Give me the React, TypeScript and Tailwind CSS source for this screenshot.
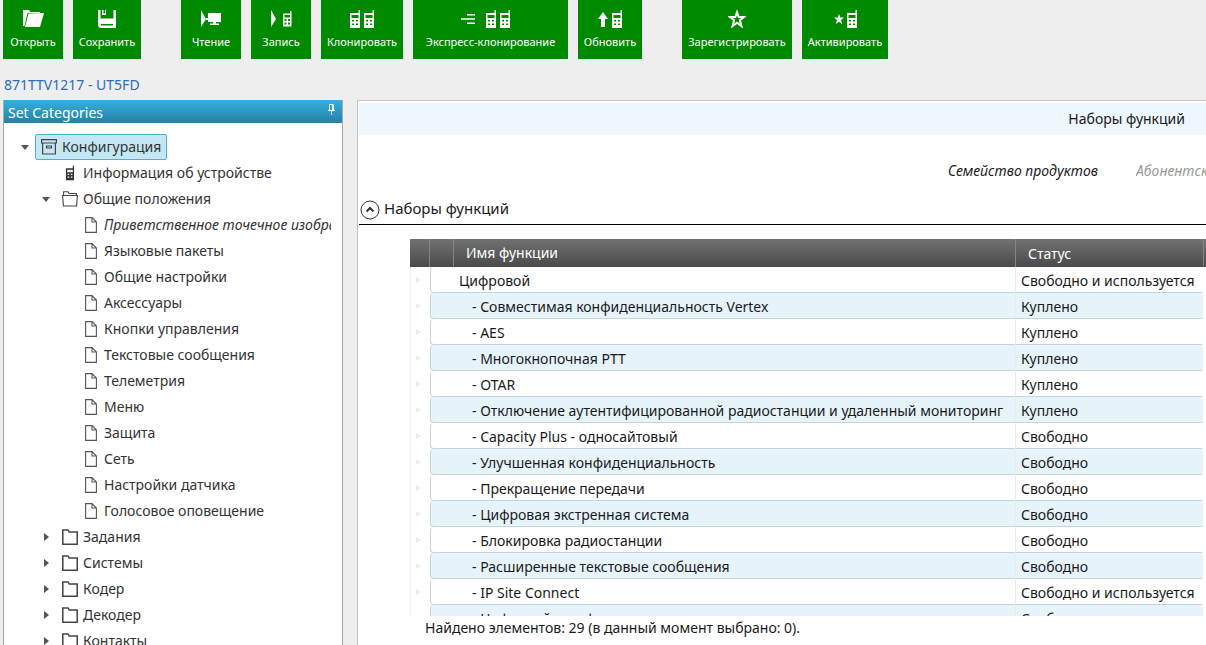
import React from "react";

type IconProps = { className?: string };

const FolderOpenSolid = () => (
  <svg width="22" height="20" viewBox="0 0 22 20" fill="#fff">
    <path d="M1 1h6l1.500 2H18v1H5.500L2.500 17H1z" />
    <path d="M6.500 4.500 22 4 18 18H3z" />
  </svg>
);

const Floppy = () => (
  <svg width="20" height="20" viewBox="0 0 20 20" fill="#fff" fillRule="evenodd">
    <path d="M1 1h2.500v8.500h13V1H19v18H3l-2-2zM4 15v1.500h12V15z" />
    <path d="M5 1h1.500v3.500H8V1h1v5H5z" />
  </svg>
);

const ReadIcon = () => (
  <svg width="20" height="20" viewBox="0 0 20 20" fill="#fff">
    <path d="M0 1 5 10 0 18z" />
    <path d="M7 4h13v9h-5v1.500h3V16H9v-1.500h3V13H7z" />
    <path d="M5 9h3v2H5z" />
  </svg>
);

const Radio = ({ className = "" }: IconProps) => (
  <svg className={className} width="10" height="20" viewBox="0 0 10 20" fill="currentColor" fillRule="evenodd">
    <path d="M8.500 1H10v18H0V4h8.500zM1.500 6v3h7V6zM2 11v1.500h2V11zm4 0v1.500h2V11zM2 14.500V16h2v-1.500zm4 0V16h2v-1.500z" />
  </svg>
);

const WriteIcon = () => (
  <span className="flex gap-1.5">
    <svg width="6" height="20" viewBox="0 0 6 20" fill="#fff">
      <path d="M0 1 5 10 0 18z" />
    </svg>
    <svg width="9" height="20" viewBox="0 0 9 20" fill="#fff" fillRule="evenodd">
      <path d="M7 2h1.500v15.500H0V4.500h7zM1.500 6v2.500h5.500V6zM1.500 10v2h2v-2zm3.500 0v2h2v-2zM1.500 13.500v2h2v-2zm3.500 0v2h2v-2z" />
    </svg>
  </span>
);

const CloneIcon = () => (
  <span className="flex gap-1">
    <Radio />
    <Radio />
  </span>
);

const ExpressIcon = () => (
  <span className="mr-2.5 flex gap-2.5">
    <svg width="15" height="20" viewBox="0 0 15 20" fill="#fff">
      <path d="M6 5h8v1.500H6zM0 9.200h14v1.500H0zM6 13.500h8V15H6z" />
    </svg>
    <CloneIcon />
  </span>
);

const UpdateIcon = () => (
  <span className="flex gap-1">
    <svg width="10" height="20" viewBox="0 0 10 20" fill="#fff">
      <path d="M5 3 10 10H7v8H3v-8H0z" />
    </svg>
    <Radio />
  </span>
);

const StarOutline = () => (
  <svg width="18" height="20" viewBox="0 0 18 20" fill="none" stroke="#fff" strokeWidth="2">
    <path d="M9 3.200 10.700 8H16l-4.100 3.100L13.400 17 9 13.700 4.600 17l1.500-5.900L2 8h5.300z" />
  </svg>
);

const ActivateIcon = () => (
  <span className="flex gap-[3px]">
    <svg width="10" height="20" viewBox="0 0 10 20" fill="#fff">
      <path d="M5 5 6.300 8.600H10L7 11l1.200 4L5 12.700 1.800 15 3 11 0 8.600h3.700z" />
    </svg>
    <Radio />
  </span>
);

const ArchiveIcon = () => (
  <svg width="16" height="16" viewBox="0 0 16 16" fill="none" stroke="#444" strokeWidth="1.200">
    <path d="M.6.600h14.800v3.400H.6zM1.600 4v11h12.800V4M5.500 7h5v2h-5z" />
  </svg>
);

const FolderIcon = ({ open }: { open?: boolean }) => (
  <svg width="16" height="16" viewBox="0 0 16 16" fill="none" stroke="#444" strokeWidth={open ? 1.1 : 1.5}>
    {open ? (
      <path d="M1.600 4.500V.8h4.400l1 1.700h7.400v2M.6 4.500h14.800L14.600 15H1.400z" />
    ) : (
      <path d="M.8.900h5.200l1.200 2h8v12.300H.8z" />
    )}
  </svg>
);

const PageIcon = () => (
  <svg width="12" height="16" viewBox="0 0 12 16" fill="none" stroke="#555" strokeWidth="1.100">
    <path d="M.6.600h6.400l4.400 4.400v10.400H.6zM7 .6V5h4.400" />
  </svg>
);

const Pin = () => (
  <svg width="7" height="11" viewBox="0 0 7 11" fill="none" stroke="#fff">
    <path d="M1.500 6V.5h4V6M0 6.500h7M3.500 6.500V11M4.500 1v5" />
  </svg>
);

const tools = [
  { label: "Открыть", width: "w-15", icon: <FolderOpenSolid /> },
  { label: "Сохранить", width: "w-17", icon: <Floppy /> },
  { label: "Чтение", width: "w-15 ml-[30px]", icon: <ReadIcon /> },
  { label: "Запись", width: "w-15", icon: <WriteIcon /> },
  { label: "Клонировать", width: "w-[82px]", icon: <CloneIcon /> },
  { label: "Экспресс-клонирование", width: "w-[155px]", icon: <ExpressIcon /> },
  { label: "Обновить", width: "w-16", icon: <UpdateIcon /> },
  { label: "Зарегистрировать", width: "w-[110px] ml-[30px]", icon: <StarOutline /> },
  { label: "Активировать", width: "w-[86px]", icon: <ActivateIcon /> },
];

const pages = [
  "Приветственное точечное изображение",
  "Языковые пакеты",
  "Общие настройки",
  "Аксессуары",
  "Кнопки управления",
  "Текстовые сообщения",
  "Телеметрия",
  "Меню",
  "Защита",
  "Сеть",
  "Настройки датчика",
  "Голосовое оповещение",
];

const folders = ["Задания", "Системы", "Кодер", "Декодер", "Контакты"];

const features = [
  ["Цифровой", "Свободно и используется"],
  ["- Совместимая конфиденциальность Vertex", "Куплено"],
  ["- AES", "Куплено"],
  ["- Многокнопочная PTT", "Куплено"],
  ["- OTAR", "Куплено"],
  ["- Отключение аутентифицированной радиостанции и удаленный мониторинг", "Куплено"],
  ["- Capacity Plus - односайтовый", "Свободно"],
  ["- Улучшенная конфиденциальность", "Свободно"],
  ["- Прекращение передачи", "Свободно"],
  ["- Цифровая экстренная система", "Свободно"],
  ["- Блокировка радиостанции", "Свободно"],
  ["- Расширенные текстовые сообщения", "Свободно"],
  ["- IP Site Connect", "Свободно и используется"],
  ["- Цифровой телефон", "Свободно"],
];

const Twisty = ({ open }: { open?: boolean }) => (
  <svg width="8" height="8" viewBox="0 0 8 8" fill="#555" className="shrink-0">
    <path d={open ? "M0 2h8L4 7z" : "M2 0 7 4 2 8z"} />
  </svg>
);

function Tree() {
  return (
    <ul className="min-h-0 flex-1 overflow-hidden pt-[11px] pr-[11px] text-[14px] leading-[26px] text-[#333]">
      <li>
        <button className="flex h-[26px] items-center gap-1.5 pl-[17px]">
          <Twisty open />
          <span className="flex h-[26px] items-center gap-[5px] rounded-xs border border-[#4fb0cc] bg-[#c5e7f3] px-[5px]">
            <ArchiveIcon />
            Конфигурация
          </span>
        </button>
        <ul>
          <li>
            <button className="flex h-[26px] items-center gap-2 pl-[61px]">
              <Radio className="h-4 w-2.5" />
              Информация об устройстве
            </button>
          </li>
          <li>
            <button className="flex h-[26px] items-center gap-[5px] pl-[38px]">
              <Twisty open />
              <span className="ml-[7px]"><FolderIcon open /></span>
              Общие положения
            </button>
            <ul>
              {pages.map((p, i) => (
                <li key={p} className="overflow-hidden">
                  <button className={i === 0 ? "flex h-[26px] items-center gap-[7px] pl-[81px] whitespace-nowrap italic" : "flex h-[26px] items-center gap-[7px] pl-[81px] whitespace-nowrap"}>
                    <PageIcon />
                    {p}
                  </button>
                </li>
              ))}
            </ul>
          </li>
          {folders.map((f) => (
            <li key={f}>
              <button className="flex h-[26px] items-center gap-[5px] pl-[38px]">
                <Twisty />
                <span className="ml-[7px]"><FolderIcon /></span>
                {f}
              </button>
            </li>
          ))}
        </ul>
      </li>
    </ul>
  );
}

function FeatureTable() {
  return (
    <div className="ml-[51px] h-[377px] overflow-hidden">
      <table className="w-full table-fixed border-separate border-spacing-0 text-left text-[14px] text-[#1a1a1a]">
        <colgroup>
          <col className="w-5" />
          <col />
          <col className="w-[187px]" />
          <col className="w-[3px]" />
        </colgroup>
        <thead>
          <tr className="h-7 bg-linear-to-b from-[#727272] to-[#4a4a4a] text-white">
            <th className="border-r border-[#858585] p-0" />
            <th className="border-r border-[#858585] p-0 font-normal">
              <div className="ml-[23px] border-l border-[#858585] pl-3 leading-7">Имя функции</div>
            </th>
            <th className="p-0 pl-3 font-normal">Статус</th>
            <th className="border-l border-[#858585] p-0" />
          </tr>
        </thead>
        <tbody>
          {features.map(([name, status], i) => (
            <tr key={name} className="group h-[26px]">
              <td className="border-l border-[#f2f2f2] p-0 pl-[5px]">
                <svg width="5" height="6" viewBox="0 0 5 6" fill="#ececec"><path d="M0 0 5 3 0 6z" /></svg>
              </td>
              <td className={(i === 0 ? "pl-7 " : "pl-[41px] ") + "truncate rounded-l-sm border-r border-b border-l border-r-[#e4eef2] border-b-[#c6d5da] border-l-[#c6d5da] p-0 pt-0.5 leading-[23px] text-clip group-even:bg-[#e6f4fa]"}>
                {name}
              </td>
              <td className="rounded-r-xs border-b border-[#c6d5da] p-0 pt-0.5 pl-[5px] leading-[23px] whitespace-nowrap group-even:bg-[#e6f4fa]">
                {status}
              </td>
              <td className="p-0" />
            </tr>
          ))}
        </tbody>
      </table>
    </div>
  );
}

export default function App() {
  return (
    <div className="flex h-screen flex-col overflow-hidden bg-[#eee] font-['Noto_Sans',sans-serif]">
      <nav className="flex gap-2.5 pl-[3px]">
        {tools.map((t) => (
          <button
            key={t.label}
            className={"flex h-[59px] shrink-0 flex-col items-center bg-[#008a00] pt-[9px] text-[11px] leading-4 whitespace-nowrap text-white " + t.width}
          >
            <span className="mb-[5px] flex h-5 items-center">{t.icon}</span>
            {t.label}
          </button>
        ))}
      </nav>
      <h1 className="mt-4 mb-[5px] pl-1 text-[14px] leading-5 text-[#2a6cc0]">871TTV1217 - UT5FD</h1>
      <div className="flex min-h-0 flex-1 pl-[3px]">
        <aside className="flex w-[340px] shrink-0 flex-col border-x border-[#aaa] bg-white">
          <header className="flex h-[23px] shrink-0 justify-between bg-linear-to-b from-[#34b0e0] to-[#2581a3] pr-[7px] pl-1 text-[14px] text-white">
            <h2 className="leading-[26px]">Set Categories</h2>
            <button aria-label="Pin" className="pb-1"><Pin /></button>
          </header>
          <Tree />
        </aside>
        <main className="ml-[14px] min-w-0 flex-1 overflow-hidden border-t border-l border-[#c4c4c4] bg-white pl-px text-[14px] text-[#1a1a1a]">
          <h2 className="mt-0.5 h-8 bg-[#eff7fe] pr-[21px] text-right leading-8">Наборы функций</h2>
          <div className="flex h-[61px] items-start justify-end gap-[38px] pt-6 leading-6 whitespace-nowrap italic">
            <span>Семейство продуктов</span>
            <span className="w-[70px] overflow-hidden text-[#999]">Абонентская</span>
          </div>
          <button className="flex h-[29px] w-full items-center gap-1 border-b border-black pl-px text-[15px]">
            <svg width="20" height="20" viewBox="0 0 20 20" fill="none" stroke="#333">
              <circle cx="10" cy="10" r="9" />
              <path d="m6.500 11.500 3.500-3.500 3.500 3.500" strokeWidth="2" />
            </svg>
            <span className="pb-[3px]">Наборы функций</span>
          </button>
          <div className="pt-3.5"><FeatureTable /></div>
          <p className="pl-[66px] leading-6">Найдено элементов: 29 (в данный момент выбрано: 0).</p>
        </main>
      </div>
    </div>
  );
}
